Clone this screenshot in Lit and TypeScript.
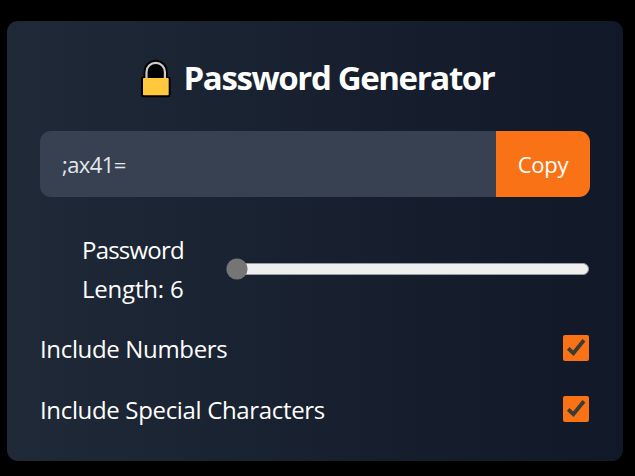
import { LitElement, html, css, svg } from "lit";
import { customElement, state } from "lit/decorators.js";

@customElement("check-row")
class CheckRow extends LitElement {
  static properties = { label: { type: String } };
  declare label: string;

  static styles = css`
    :host { display: flex; align-items: flex-start; justify-content: space-between; height: 39px; }
    .label { letter-spacing: -0.34px; white-space: nowrap; }
    .box { display: block; width: 28px; height: 28px; margin-top: 5px; }
  `;

  render() {
    return html`
      <span class="label">${this.label}</span>
      <svg class="box" viewBox="0 0 28 28" role="checkbox" aria-checked="true" aria-label=${this.label}>
        <rect x="1" y="0.9" width="26" height="26" rx="2" fill="#f97316"></rect>
        <path d="M6.2 14.4 L11.4 19.3 L21.9 6.3" fill="none" stroke="#3b3b36" stroke-width="3.8"></path>
      </svg>`;
  }
}

@customElement("app-root")
class AppRoot extends LitElement {
  @state() private password = ";ax41=";
  @state() private length = 6;

  static styles = css`
    :host {
      display: block; box-sizing: border-box; height: 476px; padding: 21px 12px 15px 7px;
      background: #000; color: #fff; overflow: hidden;
      font-family: "Segoe UI", "Open Sans", "Noto Sans", sans-serif; font-size: 24px; line-height: 39px;
    }
    .card {
      box-sizing: border-box; height: 440px; padding: 35px 33px 33px; border-radius: 11px;
      background: linear-gradient(to right, #1f2937, #111827);
    }
    .title {
      display: flex; justify-content: center; align-items: center; margin: 0 0 31px; height: 44px;
      font-size: 33px; font-weight: 700; line-height: 44px;
    }
    .lock { width: 32px; height: 40px; margin: 2px 12px 0 4px; }
    .title span { letter-spacing: -1.38px; white-space: nowrap; }
    .field { display: flex; height: 66px; border-radius: 11px; overflow: hidden; font-size: 22px; line-height: 66px; }
    .value { flex: 1; padding: 0 22px; background: #374151; color: #e5e7eb; letter-spacing: -0.6px; }
    .copy {
      width: 94px; padding: 0 0 1px; border: 0; background: #f97316; color: #fff;
      font: inherit; line-height: 64px; letter-spacing: -0.3px;
    }
    .length { display: flex; align-items: center; height: 78px; margin: 33px 0 21px; }
    .caption { width: 102px; margin: 0 42px; }
    .caption div { white-space: nowrap; }
    .name { letter-spacing: -0.8px; }
    .count { letter-spacing: -0.2px; }
    .slider { display: block; width: 364px; height: 22px; }
    .rows { display: flex; flex-direction: column; gap: 22px; }
  `;

  render() {
    return html`
      <main class="card">
        <h1 class="title">
          <svg class="lock" viewBox="0 0 32 40">
            <path d="M1 20 Q1 17.6 3.6 17.6 V12.8 A12.1 12.1 0 0 1 27.8 12.8 V17.6 Q30.6 17.6 30.6 20 V36 Q30.6 38.3 28.2 38.3 H3.3 Q1 38.3 1 36 Z" fill="#000"></path>
            <path d="M6.5 20 V13 A9.2 9.2 0 0 1 24.9 13 V20" fill="none" stroke="#ccc" stroke-width="2.2"></path>
            <rect x="3" y="19" width="25.7" height="17.3" rx="0.8" fill="#ffc83d"></rect>
          </svg>
          <span>Password Generator</span>
        </h1>
        <div class="field">
          <div class="value">${this.password}</div>
          <button class="copy">Copy</button>
        </div>
        <div class="length">
          <div class="caption">
            <div class="name">Password</div>
            <div class="count">Length: ${this.length}</div>
          </div>
          ${this.slider()}
        </div>
        <div class="rows">
          <check-row label="Include Numbers"></check-row>
          <check-row label="Include Special Characters"></check-row>
        </div>
      </main>`;
  }

  private slider() {
    return html`<svg class="slider" viewBox="0 0 364 22" role="slider" aria-valuenow=${this.length}>
      ${svg`<rect x="1.5" y="5.5" width="361" height="11" rx="5.5" fill="#efefef" stroke="#9a9da1"></rect>
      <circle cx="11" cy="11" r="10.6" fill="#757575"></circle>`}
    </svg>`;
  }
}
